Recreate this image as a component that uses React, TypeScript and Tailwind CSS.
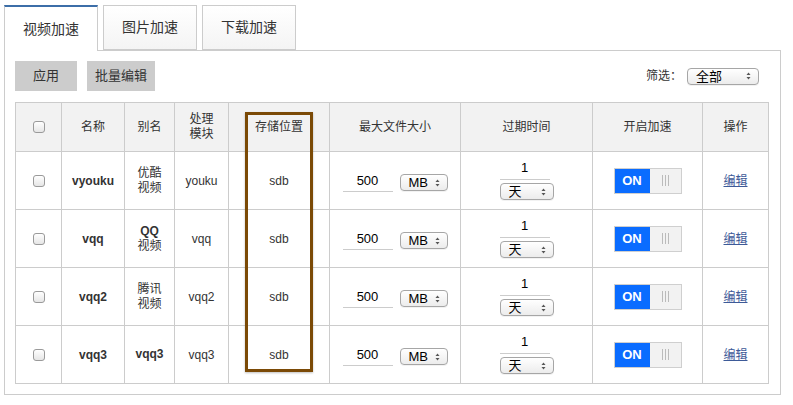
import React from "react";

const rows = [
  { name: "vyouku", alias: ["优酷", "视频"], mod: "youku" },
  { name: "vqq", alias: ["QQ", "视频"], mod: "vqq" },
  { name: "vqq2", alias: ["腾讯", "视频"], mod: "vqq2" },
  { name: "vqq3", alias: ["vqq3"], mod: "vqq3" },
];

function Arrows() {
  return (
    <svg width="5" height="8" viewBox="0 0 5 8" className="shrink-0">
      <path d="M2.5 0.5 L4.5 3 L0.5 3 Z" fill="#555" />
      <path d="M2.5 7.5 L4.5 5 L0.5 5 Z" fill="#555" />
    </svg>
  );
}

function FakeSelect({ label, w }: { label: string; w: string }) {
  return (
    <div
      className={`${w} h-[17px] flex items-center justify-between pl-[8px] pr-[7px] rounded-[4px] border border-[#a6a6a6] bg-gradient-to-b from-white to-[#ececec] text-[13px] leading-none text-black shadow-[0_1px_0_rgba(0,0,0,0.05)]`}
    >
      <span>{label}</span>
      <Arrows />
    </div>
  );
}

function Checkbox() {
  return (
    <div className="mx-auto w-[12px] h-[12px] rounded-[3px] border border-[#9a9a9a] bg-gradient-to-b from-white to-[#e6e6e6]" />
  );
}

function Toggle() {
  return (
    <div className="mx-auto flex w-[68px] h-[26px] border border-[#cfcfcf]">
      <div className="w-[35px] bg-[#0a6cff] text-white font-bold text-[13px] flex items-center justify-center">ON</div>
      <div className="flex-1 bg-[#f2f2f2] flex items-center justify-center gap-[2px]">
        <span className="w-px h-[11px] bg-[#bbb]" />
        <span className="w-px h-[11px] bg-[#bbb]" />
        <span className="w-px h-[11px] bg-[#bbb]" />
      </div>
    </div>
  );
}

export default function App() {
  const cell = "border border-[#cccccc] text-center align-middle";
  return (
    <div
      className="w-[793px] h-[405px] bg-white text-[#333] pt-[5px] pl-[4px]"
      style={{ fontFamily: '"Liberation Sans", Arial, "Noto Sans CJK SC", sans-serif' }}
    >
      {/* Tabs */}
      <div className="flex gap-[5px] h-[45px] relative z-10">
        <div className="w-[94px] h-[46px] bg-white border-l border-r border-[#cccccc] border-t-2 border-t-[#3c6ea8] flex items-center justify-center text-[14px] text-[#333]">
          视频加速
        </div>
        <div className="w-[94px] h-[45px] bg-gradient-to-b from-white to-[#f4f4f4] border border-[#cccccc] flex items-center justify-center text-[14px] text-[#333]">
          图片加速
        </div>
        <div className="w-[94px] h-[45px] bg-gradient-to-b from-white to-[#f4f4f4] border border-[#cccccc] flex items-center justify-center text-[14px] text-[#333]">
          下载加速
        </div>
      </div>

      {/* Panel */}
      <div className="relative w-[777px] border border-[#cccccc] pt-[10px] pl-[10px] pr-[11px] pb-[10px]">
        <div className="flex items-center h-[30px]">
          <button className="w-[62px] h-[30px] bg-[#cccccc] text-[13px] text-[#333]">应用</button>
          <button className="ml-[10px] w-[68px] h-[30px] bg-[#cccccc] text-[13px] text-[#333]">批量编辑</button>
          <div className="ml-auto flex items-center mr-[10px]">
            <span className="text-[12px] text-[#333] mr-[5px]">筛选：</span>
            <FakeSelect label="全部" w="w-[72px]" />
          </div>
        </div>

        <table className="mt-[11px] table-fixed border-collapse w-[753px] text-[12px]">
          <colgroup>
            <col className="w-[46px]" />
            <col className="w-[63px]" />
            <col className="w-[50px]" />
            <col className="w-[54px]" />
            <col className="w-[101px]" />
            <col className="w-[131px]" />
            <col className="w-[132px]" />
            <col className="w-[110px]" />
            <col className="w-[66px]" />
          </colgroup>
          <thead>
            <tr className="h-[49px] bg-[#f2f2f2]">
              <th className={`${cell} font-normal`}><Checkbox /></th>
              <th className={`${cell} font-normal`}>名称</th>
              <th className={`${cell} font-normal`}>别名</th>
              <th className={`${cell} font-normal leading-[15px]`}>处理<br />模块</th>
              <th className={`${cell} font-normal`}>存储位置</th>
              <th className={`${cell} font-normal`}>最大文件大小</th>
              <th className={`${cell} font-normal`}>过期时间</th>
              <th className={`${cell} font-normal`}>开启加速</th>
              <th className={`${cell} font-normal`}>操作</th>
            </tr>
          </thead>
          <tbody>
            {rows.map((r) => (
              <tr key={r.name} className="h-[58px]">
                <td className={cell}><Checkbox /></td>
                <td className={`${cell} font-bold`}>{r.name}</td>
                <td className={`${cell} leading-[15px]`}>
                  {r.alias.length === 2 ? (
                    <>
                      <span className={r.alias[0] === "QQ" ? "font-bold" : ""}>{r.alias[0]}</span>
                      <br />
                      {r.alias[1]}
                    </>
                  ) : (
                    <span className="font-bold">{r.alias[0]}</span>
                  )}
                </td>
                <td className={cell}>{r.mod}</td>
                <td className={cell}>sdb</td>
                <td className={cell}>
                  <div className="flex items-center justify-center gap-[7px] pt-[4px]">
                    <div className="w-[50px] h-[19px] border-b border-[#cccccc] text-[13px] text-black flex items-end justify-center pb-[1px]">500</div>
                    <FakeSelect label="MB" w="w-[48px]" />
                  </div>
                </td>
                <td className={cell}>
                  <div className="flex flex-col items-center">
                    <div className="w-[50px] h-[19px] border-b border-[#cccccc] text-[13px] text-black flex items-end justify-center pb-[2px] -ml-[4px]">1</div>
                    <div className="mt-[3px]">
                      <FakeSelect label="天" w="w-[54px]" />
                    </div>
                  </div>
                </td>
                <td className={cell}><Toggle /></td>
                <td className={cell}>
                  <a className="underline text-[#3d5a98]" href="#">编辑</a>
                </td>
              </tr>
            ))}
          </tbody>
        </table>

        {/* highlight overlay */}
        <div className="absolute left-[240px] top-[61px] w-[68px] h-[260px] border-[3px] border-[#7b4a06] shadow-[0_1px_2px_rgba(0,0,0,0.25)] pointer-events-none" />
      </div>
    </div>
  );
}
